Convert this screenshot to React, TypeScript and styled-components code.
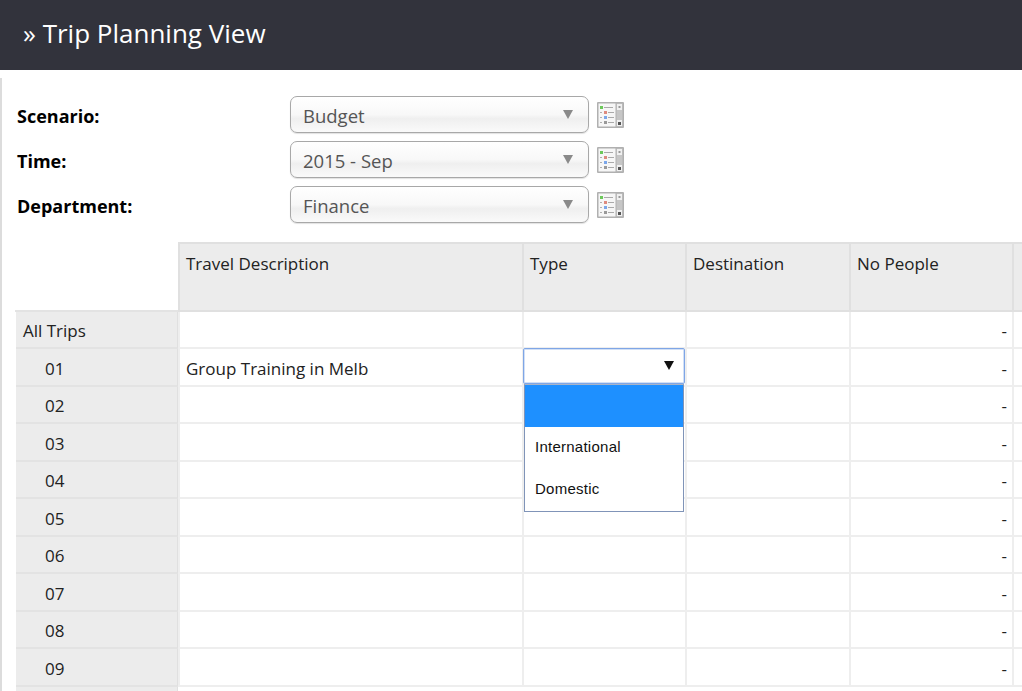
import { FC } from 'react';
import styled, { createGlobalStyle } from 'styled-components';

const GlobalStyle = createGlobalStyle`
  html, body {
    margin: 0;
    padding: 0;
    height: 100%;
    overflow: hidden;
    background: #fff;
    font-family: 'Open Sans', 'Noto Sans', sans-serif;
    color: #222;
  }
`;

const filters = [
  { label: 'Scenario:', value: 'Budget' },
  { label: 'Time:', value: '2015 - Sep' },
  { label: 'Department:', value: 'Finance' },
];

const rowLabels = ['01', '02', '03', '04', '05', '06', '07', '08', '09'];

const ListIcon: FC = () => (
  <StyledListIcon width="27" height="26" viewBox="0 0 27 26">
    <rect x="0" y="0" width="27" height="26" rx="1" fill="#b0b0b0" />
    <rect x="1.5" y="1.5" width="17" height="23" fill="#f6f6f6" />
    <rect x="19.5" y="1.5" width="6" height="23" fill="#c6c6c6" />
    <rect x="20" y="2" width="5" height="6" fill="#f0f0f0" />
    <rect x="20" y="18" width="5" height="6" fill="#f0f0f0" />
    <rect x="21.5" y="4" width="2" height="2" fill="#999" />
    <rect x="21" y="20" width="3" height="3" fill="#555" />
    <rect x="3" y="4" width="3" height="3" fill="#6cc85a" />
    <rect x="7" y="5" width="9" height="1" fill="#aaa" />
    <rect x="3" y="10" width="2" height="1" fill="#b0b0b0" />
    <rect x="7" y="9" width="3" height="3" fill="#dd8a7e" />
    <rect x="11" y="10" width="6" height="1" fill="#aaa" />
    <rect x="3" y="15" width="2" height="1" fill="#b0b0b0" />
    <rect x="7" y="14" width="3" height="3" fill="#7aa6ea" />
    <rect x="11" y="15" width="6" height="1" fill="#aaa" />
    <rect x="3" y="20" width="2" height="1" fill="#b0b0b0" />
    <rect x="7" y="19" width="3" height="3" fill="#999" />
    <rect x="11" y="20" width="6" height="1" fill="#aaa" />
  </StyledListIcon>
);

const App: FC = () => {
  return (
    <>
      <GlobalStyle />
      <Header>» Trip Planning View</Header>
      <Content>
        <Filters>
          {filters.map((f) => (
            <FilterRow key={f.label}>
              <FilterLabel>{f.label}</FilterLabel>
              <FilterSelect>
                <span>{f.value}</span>
                <Caret />
              </FilterSelect>
              <ListIcon />
            </FilterRow>
          ))}
        </Filters>
        <Sheet>
          <Corner />
          <ColHead>Travel Description</ColHead>
          <ColHead>Type</ColHead>
          <ColHead>Destination</ColHead>
          <ColHead>No People</ColHead>
          <ColHead />

          <RowHead>All Trips</RowHead>
          <Cell />
          <Cell />
          <Cell />
          <NumCell>-</NumCell>
          <Cell />

          {rowLabels.map((label, i) => (
            <Row key={label}>
              <RowHead $indent>{label}</RowHead>
              <Cell>{i === 0 ? 'Group Training in Melb' : ''}</Cell>
              {i === 0 ? (
                <EditCell>
                  <EditBox>
                    <EditArrow />
                  </EditBox>
                  <DropList>
                    <DropItem $selected />
                    <DropItem>International</DropItem>
                    <DropItem>Domestic</DropItem>
                  </DropList>
                </EditCell>
              ) : (
                <Cell />
              )}
              <Cell />
              <NumCell>-</NumCell>
              <Cell />
            </Row>
          ))}
          <RowHead />
        </Sheet>
      </Content>
    </>
  );
};

export default App;

const Header = styled.header`
  height: 70px;
  box-sizing: border-box;
  padding: 0 0 0 23px;
  background: #32333c;
  color: #fff;
  font-size: 26px;
  line-height: 66px;
`;

const Content = styled.main`
  margin-top: 8px;
  height: 613px;
  box-sizing: border-box;
  border-left: 2px solid #dcdcdc;
  padding: 18px 0 0 14px;
  overflow: hidden;
`;

const Filters = styled.div`
  display: flex;
  flex-direction: column;
  gap: 9px;
`;

const FilterRow = styled.div`
  display: flex;
  align-items: center;
  height: 36px;
`;

const FilterLabel = styled.label`
  width: 274px;
  padding: 4px 0 0 1px;
  box-sizing: border-box;
  font-size: 18px;
  font-weight: 700;
  color: #000;
`;

const FilterSelect = styled.div`
  width: 299px;
  height: 37px;
  box-sizing: border-box;
  margin-right: 8px;
  padding: 3px 15px 0 12px;
  display: flex;
  align-items: center;
  justify-content: space-between;
  border: 1px solid #a8a8a8;
  border-radius: 7px;
  background: linear-gradient(#ffffff 0%, #f8f8f8 50%, #efefef 62%, #fafafa 100%);
  box-shadow: 0 1px 1px rgba(0, 0, 0, 0.12);
  color: #555;
  font-size: 18.5px;
`;

const Caret = styled.i`
  width: 0;
  height: 0;
  margin-bottom: 3px;
  border-left: 5.5px solid transparent;
  border-right: 5.5px solid transparent;
  border-top: 9px solid #8a8a8a;
`;

const StyledListIcon = styled.svg`
  margin-top: 2px;
`;

const Sheet = styled.div`
  margin-top: 20px;
  margin-left: -1px;
  display: grid;
  grid-template-columns: 163px 344px 163px 164px 163px 100px;
  grid-template-rows: 69.5px;
  grid-auto-rows: 37.5px;
  width: 1097px;
  font-size: 17px;
  color: #222;
`;

const Row = styled.div`
  display: contents;
`;

const Corner = styled.div`
  border-bottom: 2px solid #e3e3e3;
`;

const ColHead = styled.div`
  box-sizing: border-box;
  padding: 8px 6px;
  background: #ececec;
  border: 1px solid #e0e0e0;
  border-width: 2px 0 2px 2px;
  line-height: 23px;
`;

const RowHead = styled.div<{ $indent?: boolean }>`
  box-sizing: border-box;
  display: flex;
  align-items: center;
  margin-left: 1px;
  padding: 3px 0 0 ${(p) => (p.$indent ? '29px' : '7px')};
  background: #ececec;
  border-bottom: 2px solid #e3e3e3;
  border-right: 1px solid #e0e0e0;
`;

const Cell = styled.div`
  box-sizing: border-box;
  display: flex;
  align-items: center;
  padding: 3px 6px 0;
  border-left: 2px solid #eeeeee;
  border-bottom: 2px solid #eeeeee;
`;

const NumCell = styled(Cell)`
  justify-content: flex-end;
  padding-right: 5px;
`;

const EditCell = styled.div`
  position: relative;
  box-sizing: border-box;
  border-left: 2px solid #eeeeee;
  border-bottom: 2px solid #eeeeee;
`;

const EditBox = styled.div`
  position: absolute;
  top: -1px;
  left: -1px;
  width: 162px;
  height: 36px;
  box-sizing: border-box;
  background: #fff;
  border: 1px solid #7fa6e6;
  border-radius: 2px;
  box-shadow: 0 0 0 1px rgba(127, 166, 230, 0.35) inset;
`;

const EditArrow = styled.i`
  position: absolute;
  top: 12px;
  right: 10px;
  width: 0;
  height: 0;
  border-left: 5px solid transparent;
  border-right: 5px solid transparent;
  border-top: 9px solid #111;
`;

const DropList = styled.div`
  position: absolute;
  top: 35px;
  left: 0;
  width: 160px;
  height: 128px;
  box-sizing: border-box;
  z-index: 2;
  background: #fff;
  border: 1px solid #8094b8;
  border-top-color: #a9b4c8;
  display: flex;
  flex-direction: column;
`;

const DropItem = styled.div<{ $selected?: boolean }>`
  height: 41.5px;
  flex: none;
  box-sizing: border-box;
  padding: 0 0 1px 10px;
  display: flex;
  align-items: center;
  background: ${(p) => (p.$selected ? '#1e90ff' : 'transparent')};
  font-family: 'Liberation Sans', Arial, sans-serif;
  font-size: 15px;
  letter-spacing: 0.25px;
  color: #111;
`;
